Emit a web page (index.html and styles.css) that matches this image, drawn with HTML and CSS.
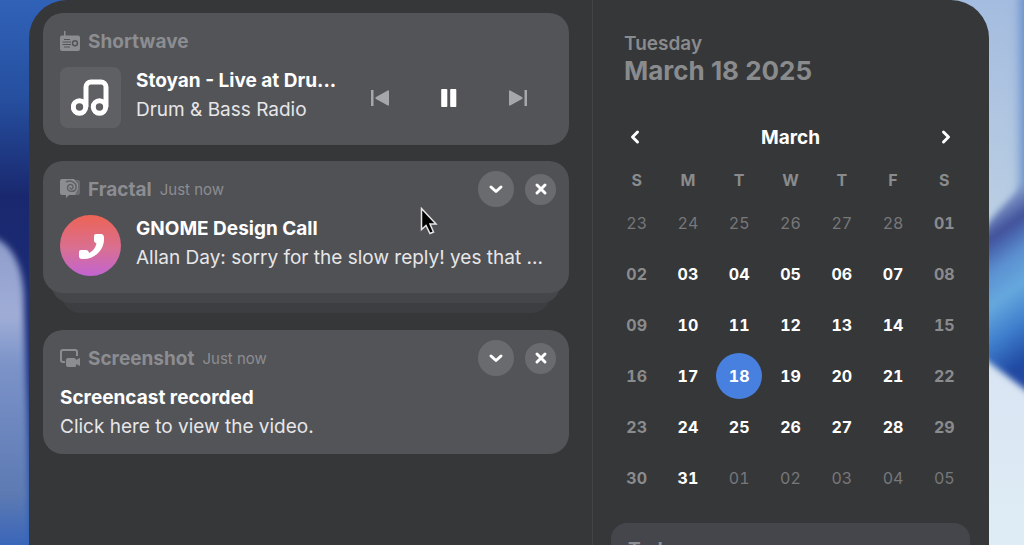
FILE: index.html
```
<!DOCTYPE html>
<html lang="en">
<head>
    <meta charset="UTF-8">
    <meta name="viewport" content="width=device-width, initial-scale=1.0">
    <title>Notifications and Calendar</title>
    <link rel="stylesheet" href="styles.css">
</head>
<body>
    <svg class="wallpaper" viewBox="0 0 1024 545" preserveAspectRatio="none" aria-hidden="true">
        <defs>
            <linearGradient id="leftSky" x1="0" y1="0" x2="0" y2="1">
                <stop offset="0" stop-color="#3062b8"/>
                <stop offset="0.18" stop-color="#264f9f"/>
                <stop offset="0.36" stop-color="#19286e"/>
                <stop offset="0.7" stop-color="#1d2f7d"/>
                <stop offset="1" stop-color="#2f66c0"/>
            </linearGradient>
            <linearGradient id="petal" x1="0" y1="0" x2="0" y2="1">
                <stop offset="0" stop-color="#8e9ccb"/>
                <stop offset="0.25" stop-color="#9fadd6"/>
                <stop offset="0.4" stop-color="#7b93c8"/>
                <stop offset="0.8" stop-color="#5d7ab3"/>
                <stop offset="1" stop-color="#2f60ba"/>
            </linearGradient>
            <linearGradient id="rightSky" x1="0" y1="0" x2="0" y2="1">
                <stop offset="0" stop-color="#a4bcdf"/>
                <stop offset="0.38" stop-color="#b9cee3"/>
                <stop offset="0.65" stop-color="#d9e4f2"/>
                <stop offset="1" stop-color="#deedf5"/>
            </linearGradient>
            <linearGradient id="wave" gradientUnits="userSpaceOnUse" x1="990" y1="205" x2="1090" y2="345">
                <stop offset="0" stop-color="#8ba6d2"/>
                <stop offset="0.16" stop-color="#40509a"/>
                <stop offset="0.32" stop-color="#5b8fd0"/>
                <stop offset="0.48" stop-color="#66a9de"/>
                <stop offset="0.66" stop-color="#3f7fcd"/>
                <stop offset="0.86" stop-color="#2049a2"/>
            </linearGradient>
            <filter id="soft" x="-50%" y="-20%" width="200%" height="140%"><feGaussianBlur stdDeviation="3"/></filter>
            <filter id="softer" x="-100%" y="-20%" width="300%" height="140%"><feGaussianBlur stdDeviation="6"/></filter>
        </defs>
        <rect width="512" height="545" fill="url(#leftSky)"/>
        <rect x="512" width="512" height="545" fill="url(#rightSky)"/>
        <path d="M-20 235C10 235 24 265 24 300C24 330 29 400 29 560H-20Z" fill="url(#petal)" filter="url(#soft)"/>
        <path d="M1044 -10V210L1021 200V-10Z" fill="#5f88c8" filter="url(#softer)"/>
        <path d="M1060 145C1010 200 990 215 970 250V348L1060 416Z" fill="url(#wave)" filter="url(#soft)"/>
    </svg>

    <main class="panel">
        <section class="messages" aria-label="Notifications">
            <article class="card">
                <header class="card-header">
                    <svg class="app-icon" viewBox="0 0 20 20" aria-hidden="true">
                        <path fill="currentColor" fill-rule="evenodd" d="M4 0h1.500v4.500H18a2 2 0 0 1 2 2V18a2 2 0 0 1-2 2H2a2 2 0 0 1-2-2V6.500a2 2 0 0 1 2-2h2zM4 8v1h6V8zM2.500 10.500v1H11v-1zM2.500 13v1H11v-1zM4 15.500v1h6v-1zM15 9a3.200 3.200 0 1 0 0 6.400A3.200 3.200 0 0 0 15 9zm0 1.500a1.700 1.700 0 1 1 0 3.400 1.700 1.700 0 0 1 0-3.400z"/>
                    </svg>
                    <h2 class="app-name">Shortwave</h2>
                </header>
                <div class="card-body">
                    <div class="cover">
                        <svg width="40" height="38" viewBox="0 0 40 38" aria-hidden="true">
                            <g fill="none" stroke="#fff" stroke-width="5">
                                <circle cx="8.500" cy="28" r="6.200"/>
                                <circle cx="28.500" cy="28" r="6.200"/>
                                <path d="M15 28V8a5 5 0 0 1 5-5h10a5 5 0 0 1 5 5V28"/>
                            </g>
                        </svg>
                    </div>
                    <div class="card-text">
                        <h3 class="title">Stoyan - Live at Dru...</h3>
                        <p class="text">Drum &amp; Bass Radio</p>
                    </div>
                    <div class="player">
                        <button class="player-btn dim" aria-label="Previous">
                            <svg width="20" height="18" viewBox="0 0 20 18"><path fill="currentColor" d="M1 1h2.500v16H1zM17.800 1.400Q19 .8 19 2.400v13.200q0 1.600-1.200 1L6 10q-1.500-1 0-2z"/></svg>
                        </button>
                        <button class="player-btn" aria-label="Pause">
                            <svg width="20" height="20" viewBox="0 0 20 20"><path fill="currentColor" d="M3 1h4.500q.8 0 .8.800v16.400q0 .8-.8.800H3q-.8 0-.8-.8V1.800Q2.200 1 3 1zM12 1h4.500q.8 0 .8.800v16.400q0 .8-.8.800H12q-.8 0-.8-.8V1.800q0-.8.8-.8z"/></svg>
                        </button>
                        <button class="player-btn dim" aria-label="Next">
                            <svg width="20" height="18" viewBox="0 0 20 18"><path fill="currentColor" d="M16.500 1H19v16h-2.500zM2.200 1.400Q1 .8 1 2.400v13.200q0 1.600 1.200 1L14 10q1.500-1 0-2z"/></svg>
                        </button>
                    </div>
                </div>
            </article>

            <div class="stack">
                <article class="card">
                    <header class="card-header">
                        <svg class="app-icon" viewBox="0 0 20 20" aria-hidden="true">
                            <path fill="currentColor" opacity=".45" d="M12 1h6a2 2 0 0 1 2 2v11a2 2 0 0 1-2 2h-6z"/>
                            <path fill="currentColor" d="M2 0h12l4 5v5l-3 6H9l-3 3v-3H2a2 2 0 0 1-2-2V2a2 2 0 0 1 2-2z"/>
                            <path fill="none" stroke="#606165" stroke-width="1.500" d="M6 3C11 .5 17 4 16 9S7 13 7.500 8.500s6-3.500 5.500-.5-3 2-2.800.4"/>
                        </svg>
                        <h2 class="app-name">Fractal</h2>
                        <span class="time">Just now</span>
                        <div class="actions">
                            <button class="round expand" aria-label="Expand">
                                <svg width="16" height="16" viewBox="0 0 16 16"><path d="M3 6l5 4.500L13 6"/></svg>
                            </button>
                            <button class="round" aria-label="Close">
                                <svg width="16" height="16" viewBox="0 0 16 16"><path d="M4 4l8 8M12 4l-8 8"/></svg>
                            </button>
                        </div>
                    </header>
                    <div class="card-body">
                        <div class="cover call">
                            <svg width="30" height="30" viewBox="0 0 30 30" aria-hidden="true">
                                <path fill="#fff" d="M20 3h5q2.500 0 3 3C29 18 19 29 6 28q-3 0-3-3v-4q0-2 2-2h5q2 0 2.500 1.500l.7 1.500C17 20 19.500 17 20.500 12.500L19 11.500q-1-.6-1-2V5q0-2 2-2z"/>
                            </svg>
                        </div>
                        <div class="card-text">
                            <h3 class="title">GNOME Design Call</h3>
                            <p class="text">Allan Day: sorry for the slow reply! yes that ...</p>
                        </div>
                    </div>
                </article>
            </div>

            <article class="card">
                <header class="card-header">
                    <svg class="app-icon" viewBox="0 0 20 20" aria-hidden="true">
                        <path fill="none" stroke="currentColor" stroke-width="2" d="M5 14H3a2 2 0 0 1-2-2V4a2 2 0 0 1 2-2h12a2 2 0 0 1 2 2v4"/>
                        <path fill="currentColor" d="M8 10h6a2 2 0 0 1 2 2l4-2v8l-4-2a2 2 0 0 1-2 3H8a2 2 0 0 1-2-2v-5a2 2 0 0 1 2-2z"/>
                    </svg>
                    <h2 class="app-name">Screenshot</h2>
                    <span class="time">Just now</span>
                    <div class="actions">
                        <button class="round expand" aria-label="Expand">
                            <svg width="16" height="16" viewBox="0 0 16 16"><path d="M3 6l5 4.500L13 6"/></svg>
                        </button>
                        <button class="round" aria-label="Close">
                            <svg width="16" height="16" viewBox="0 0 16 16"><path d="M4 4l8 8M12 4l-8 8"/></svg>
                        </button>
                    </div>
                </header>
                <div class="card-body">
                    <div class="card-text">
                        <h3 class="title">Screencast recorded</h3>
                        <p class="text">Click here to view the video.</p>
                    </div>
                </div>
            </article>
        </section>

        <section class="side" aria-label="Calendar">
            <div class="today">
                <p class="weekday">Tuesday</p>
                <h1 class="date">March 18 2025</h1>
            </div>
            <div class="month">
                <button class="month-btn" aria-label="Previous month">
                    <svg width="16" height="16" viewBox="0 0 16 16"><path d="M10.500 3L5.500 8l5 5"/></svg>
                </button>
                <h2 class="month-name">March</h2>
                <button class="month-btn" aria-label="Next month">
                    <svg width="16" height="16" viewBox="0 0 16 16"><path d="M5.500 3l5 5-5 5"/></svg>
                </button>
            </div>
            <table class="calendar">
                <thead>
                    <tr><th>S</th><th>M</th><th>T</th><th>W</th><th>T</th><th>F</th><th>S</th></tr>
                </thead>
                <tbody id="days"></tbody>
            </table>
            <div class="events">
                <h2 class="events-title">Today</h2>
            </div>
        </section>
    </main>

    <svg class="cursor" width="18" height="29" viewBox="0 0 18 29" aria-hidden="true">
        <path d="M1.500 1.500v21l4.500-4 4 8 3.500-1.500-3.500-8h6z" fill="#000" stroke="#e6e6e6" stroke-width="1.500"/>
    </svg>

    <script>
        const days = document.getElementById('days');

        // The grid starts on the Sunday before March 1st
        for (let week = 0; week < 6; week++) {
            const row = document.createElement('tr');
            for (let i = 0; i < 7; i++) {
                const day = new Date(2025, 1, 23 + week * 7 + i);
                const cell = document.createElement('td');
                const button = document.createElement('button');
                button.className = 'day';
                if (day.getMonth() !== 2) button.classList.add('other');
                else if (i === 0 || i === 6) button.classList.add('weekend');
                if (day.getMonth() === 2 && day.getDate() === 18) button.classList.add('selected');
                button.textContent = String(day.getDate()).padStart(2, '0');
                cell.appendChild(button);
                row.appendChild(cell);
            }
            days.appendChild(row);
        }
    </script>
</body>
</html>
```
FILE: styles.css
```
* {
    box-sizing: border-box;
}
body {
    font-family: Inter, "Noto Sans", sans-serif;
    font-size: 19px;
    margin: 0;
    height: 100vh;
    overflow: hidden;
    color: #fff;
    background-color: #2a519f;
}
h1, h2, h3, p {
    margin: 0;
}
button {
    padding: 0;
    border: none;
    background: none;
    color: inherit;
    font: inherit;
    cursor: pointer;
}
.wallpaper {
    position: absolute;
    width: 100%;
    height: 100%;
    z-index: -1;
}
.panel {
    display: flex;
    height: 100%;
    margin: 0 35px 0 29px;
    overflow: hidden;
    background-color: #363739;
    border-radius: 38px 38px 0 0;
}

/* notifications */
.messages {
    flex: 1;
    min-width: 0;
    display: flex;
    flex-direction: column;
    gap: 16px;
    padding: 13px 23px 0 14px;
}
.card {
    position: relative;
    padding: 10px 17px 13px;
    background-color: #535458;
    border-radius: 20px;
}
.card-header {
    display: flex;
    align-items: center;
    height: 36px;
    color: #8c8d91;
}
.app-icon {
    width: 20px;
    height: 20px;
    margin-right: 8px;
}
.app-name {
    font-size: 19px;
    font-weight: 700;
}
.time {
    margin-left: 8px;
    font-size: 15px;
}
.actions {
    display: flex;
    align-items: center;
    gap: 11px;
    margin-left: auto;
    margin-right: -4px;
}
.round {
    display: flex;
    align-items: center;
    justify-content: center;
    width: 31px;
    height: 31px;
    border-radius: 50%;
    background-color: #6a6b6f;
}
.expand {
    width: 36px;
    height: 36px;
}
.round path, .month-btn path {
    fill: none;
    stroke: #fff;
    stroke-width: 3;
    stroke-linecap: round;
    stroke-linejoin: round;
}
.card-body {
    display: flex;
    align-items: flex-start;
    padding-top: 7px;
}
.cover {
    display: flex;
    align-items: center;
    justify-content: center;
    width: 61px;
    height: 61px;
    margin: 1px 15px 4px 0;
    border-radius: 8px;
    background-color: #5f6064;
}
.call {
    border-radius: 50%;
    background: linear-gradient(#ec6455, #d96f92 55%, #c264d2);
}
.card-text {
    flex: 1;
    min-width: 0;
    line-height: 29px;
    white-space: nowrap;
}
.title {
    font-size: 19px;
    font-weight: 700;
}
.text {
    color: #e6e6e8;
}
.player {
    display: flex;
    margin-top: 10px;
}
.player-btn {
    display: flex;
    align-items: center;
    justify-content: center;
    width: 69px;
    height: 44px;
}
.dim {
    color: #a6a7aa;
}
.stack {
    position: relative;
    z-index: 0;
    padding-bottom: 21px;
}
.stack .card {
    background-color: #505155;
}
.stack::before, .stack::after {
    content: "";
    position: absolute;
    z-index: -1;
    left: 8px;
    right: 8px;
    bottom: 11px;
    height: 50px;
    border-radius: 20px;
    background-color: #45464a;
}
.stack::after {
    z-index: -2;
    left: 18px;
    right: 18px;
    bottom: 1px;
    background-color: #3d3e41;
}

/* calendar */
.side {
    width: 397px;
    padding: 30px 19px 0 18px;
    border-left: 1px solid #434447;
    background-clip: padding-box;
}
.today {
    padding-left: 13px;
    color: #8a8b8d;
}
.weekday {
    font-weight: 600;
    line-height: 27px;
}
.date {
    font-size: 26px;
    font-weight: 700;
    line-height: 28px;
}
.month {
    display: flex;
    align-items: center;
    justify-content: space-between;
    height: 46px;
    margin-top: 29px;
}
.month-btn {
    display: flex;
    align-items: center;
    justify-content: center;
    width: 48px;
    height: 46px;
}
.month-name {
    font-size: 19px;
    font-weight: 700;
}
.calendar {
    width: 100%;
    table-layout: fixed;
    border-collapse: collapse;
}
.calendar th {
    height: 37px;
    padding: 3px 0 0;
    font-size: 16px;
    font-weight: 700;
    color: #8a8b8d;
}
.calendar td {
    height: 51px;
    padding: 0;
    text-align: center;
}
.day {
    width: 46px;
    height: 46px;
    border-radius: 50%;
    font-size: 16px;
    font-weight: 700;
    font-variant-numeric: tabular-nums;
    vertical-align: middle;
}
.weekend {
    color: #8a8b8d;
}
.other {
    color: #77787a;
    font-weight: 400;
}
.selected {
    background-color: #4880e0;
}
.events {
    margin-top: 20px;
    padding: 15px 17px;
    border-radius: 16px;
    background-color: #45464b;
}
.events-title {
    font-size: 19px;
    font-weight: 700;
    line-height: 24px;
    color: #8c8d91;
}
.cursor {
    position: absolute;
    left: 420px;
    top: 207px;
    pointer-events: none;
}
```
